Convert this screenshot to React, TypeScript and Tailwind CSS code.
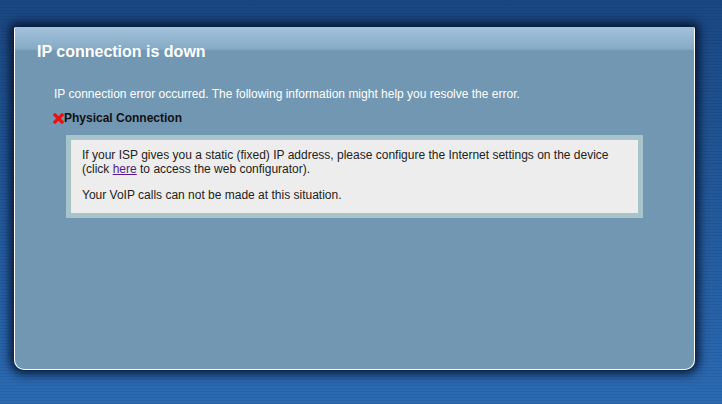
export default function App() {
  return (
    <div
      className="h-screen w-full overflow-hidden pt-[27px] pl-[14px] bg-[image:repeating-linear-gradient(0deg,rgba(0,0,0,0.07)_0px,rgba(0,0,0,0.07)_1px,transparent_1px,transparent_3px),linear-gradient(to_bottom,#1a4782,#2b6ab3)]"
      style={{ fontFamily: '"Liberation Sans", Arial, sans-serif' }}
    >
      <div className="w-[681px] h-[343px] rounded-b-[10px] rounded-t-[2px] border-x border-b border-white shadow-[0_0_10px_4px_rgba(2,12,32,0.85)] bg-[image:linear-gradient(to_bottom,#a3c2dc_0px,#86aac6_22px,#7a9fbb_23px,#7197b3_24px,#7197b3_100%)] pl-[22px] pr-[50px]">
        <h1 className="pt-[16px] text-[16px] leading-[18px] font-bold text-white">IP connection is down</h1>
        <div className="pl-[17px]">
          <p className="mt-[26px] text-[12px] leading-[14px] text-white">
            IP connection error occurred. The following information might help you resolve the error.
          </p>
          <div className="mt-[10px] flex items-center text-[12px] leading-[14px] font-bold text-[#111]">
            <svg width="11" height="11" viewBox="0 0 11 11" className="mt-[1px] -ml-[1px]">
              <path d="M2 2 L9 9 M9 2 L2 9" stroke="#e81212" strokeWidth="3.2" strokeLinecap="square" />
            </svg>
            <span>Physical Connection</span>
          </div>
          <div className="mt-[10px] ml-[12px] w-[577px] border-[5px] border-[#a8c4cb] bg-[#ededed] pt-[8px] pb-[11px] pl-[11px] pr-[8px] text-[12px] leading-[14px] text-[#222]">
            <p>
              If your ISP gives you a static (fixed) IP address, please configure the Internet settings on the device
              <br />
              (click <a className="text-[#551a8b] underline">here</a> to access the web configurator).
            </p>
            <p className="mt-[12px]">Your VoIP calls can not be made at this situation.</p>
          </div>
        </div>
      </div>
    </div>
  )
}
